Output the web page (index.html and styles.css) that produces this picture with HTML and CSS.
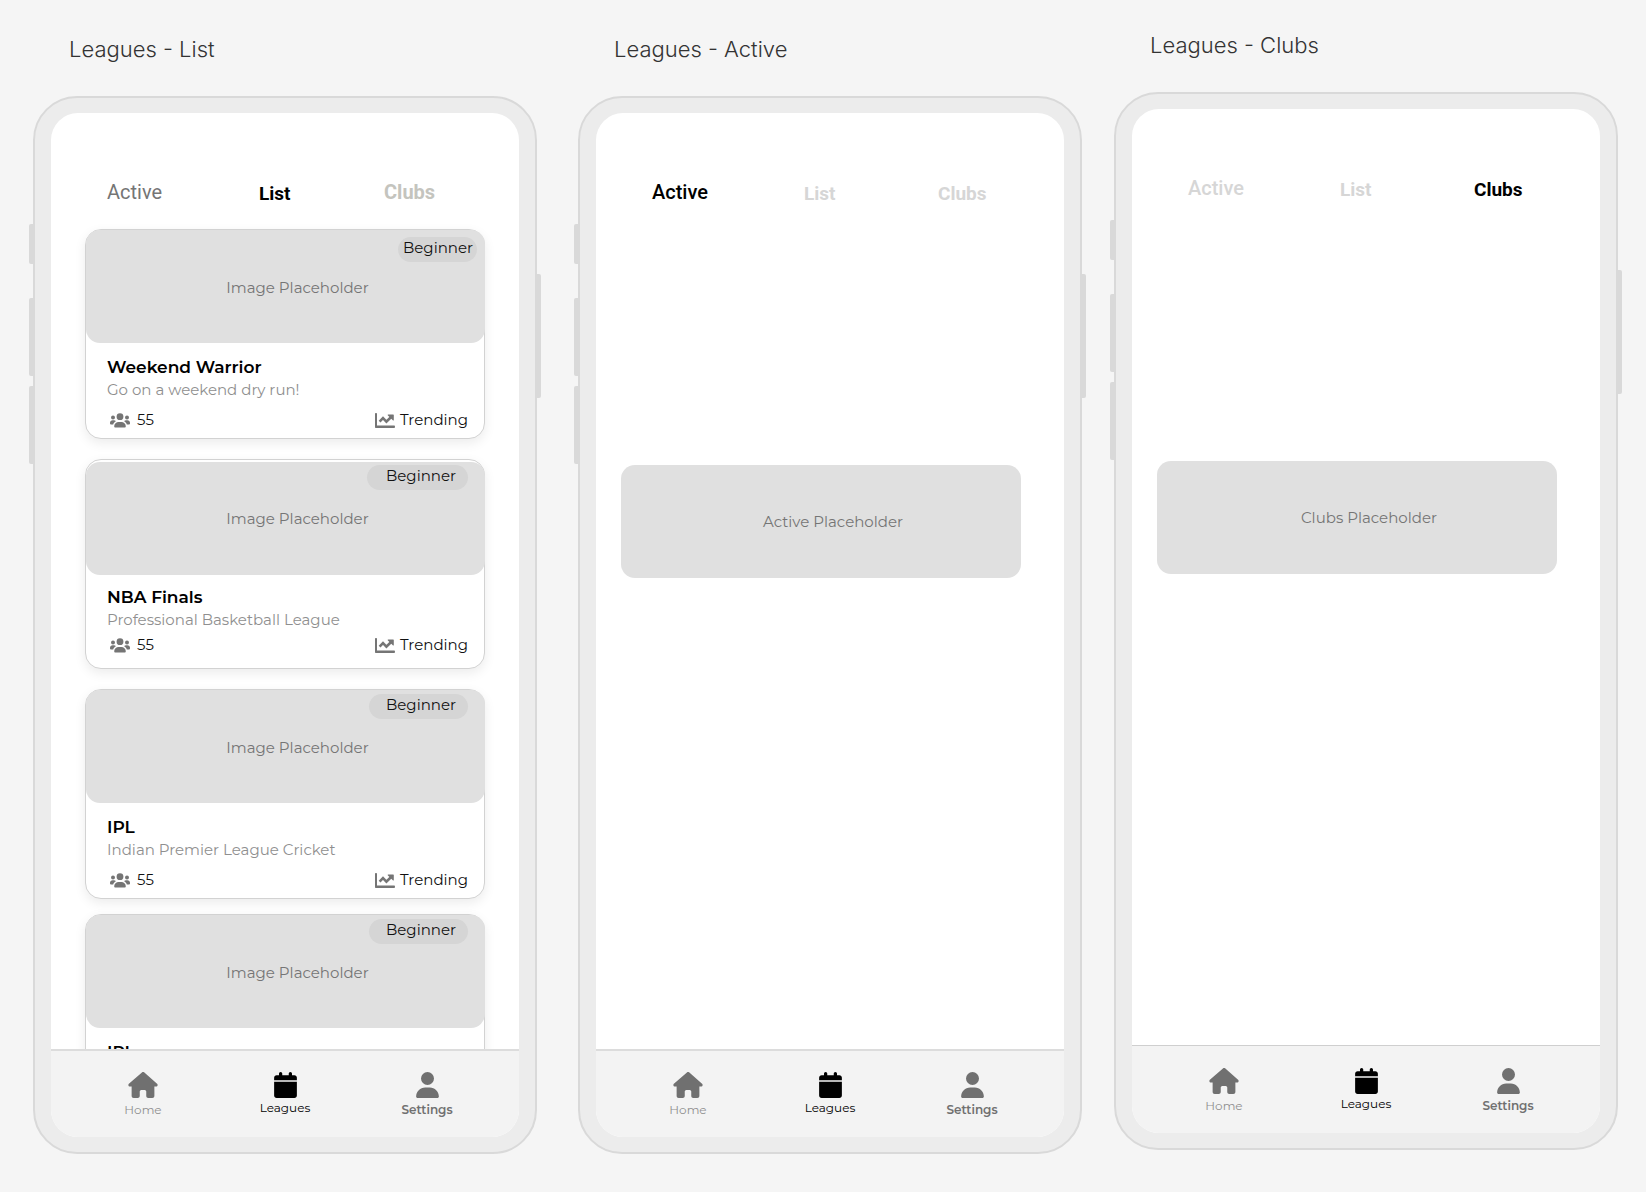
FILE: index.html
```
<!DOCTYPE html>
<html lang="en">
<head>
<meta charset="utf-8">
<meta name="viewport" content="width=device-width, initial-scale=1">
<title>Leagues</title>
<link rel="stylesheet" href="styles.css">
</head>
<body>
<svg class="sprite" aria-hidden="true">
  <symbol id="home" viewBox="0 0 576 512"><path d="M575.8 255.5c0 18-15 32.1-32 32.1h-32l.7 160.2c0 2.7-.2 5.4-.5 8.1V472c0 22.1-17.9 40-40 40H456c-1.1 0-2.2 0-3.3-.1c-1.4 .1-2.8 .1-4.2 .1H416 392c-22.1 0-40-17.9-40-40V448 384c0-17.7-14.3-32-32-32H256c-17.7 0-32 14.3-32 32v64 24c0 22.1-17.9 40-40 40H160 128.1c-1.5 0-3-.1-4.5-.2c-1.2 .1-2.4 .2-3.6 .2H104c-22.1 0-40-17.9-40-40V360c0-.9 0-1.9 .1-2.8V287.6H32c-18 0-32-14-32-32.1c0-9 3-17 10-24L266.4 8c7-7 15-8 22-8s15 2 21 7L564.8 231.5c8 7 12 15 11 24z"/></symbol>
  <symbol id="calendar" viewBox="0 0 448 512"><path d="M96 32V64H48C21.5 64 0 85.5 0 112v48H448V112c0-26.5-21.5-48-48-48H352V32c0-17.7-14.3-32-32-32s-32 14.3-32 32V64H160V32c0-17.7-14.3-32-32-32S96 14.3 96 32zM448 192H0V464c0 26.5 21.5 48 48 48H400c26.5 0 48-21.5 48-48V192z"/></symbol>
  <symbol id="user" viewBox="0 0 448 512"><path d="M224 256A128 128 0 1 0 224 0a128 128 0 1 0 0 256zm-45.7 48C79.8 304 0 383.8 0 482.3C0 498.7 13.3 512 29.7 512H418.3c16.4 0 29.7-13.3 29.7-29.7C448 383.8 368.2 304 269.7 304H178.3z"/></symbol>
  <symbol id="people" viewBox="0 0 20 15"><circle cx="10" cy="3.7" r="3.4"/><circle cx="3" cy="4.4" r="2"/><circle cx="17" cy="4.4" r="2"/><path d="M4.2 13.3C4.2 10.6 6.300 9 8.600 9h2.800c2.300 0 4.400 1.600 4.400 4.300 0 .8-.5 1.200-1.200 1.200H5.400c-.7 0-1.200-.4-1.200-1.200zM0 9.800C0 8.300 1.200 7.300 2.600 7.300h1.200c.9 0 1.700.4 2.200 1C4.500 9 3.500 10.200 3.200 11.500H1C.4 11.500 0 11.200 0 10.600zM20 9.800c0-1.500-1.200-2.500-2.600-2.500h-1.200c-.9 0-1.700.4-2.200 1 1.500.7 2.500 1.900 2.800 3.200H19c.6 0 1-.3 1-.9z"/></symbol>
  <symbol id="chart" viewBox="0 0 20 15"><path d="M1 0c.6 0 1 .4 1 1v11.500h17c.6 0 1 .5 1 1.200s-.4 1.300-1 1.300H1c-.6 0-1-.4-1-1V1C0 .4.400 0 1 0z"/><path d="M4.600 8.600 8 5.200l3.400 3.400L16.400 3.800" fill="none" stroke="currentColor" stroke-width="2.600"/><path d="M13.300 1.400h4.900c.4 0 .6.200.6.600v4.900c0 .6-.6.800-1 .4L12.900 2.400c-.4-.4-.2-1 .4-1z"/></symbol>
</svg>

<div class="board">
  <section class="frame frame--first">
    <h2 class="frame__title">Leagues - List</h2>
    <div class="phone">
      <span class="key key--mute"></span><span class="key key--up"></span><span class="key key--down"></span><span class="key key--power"></span>
      <div class="screen">
        <nav class="tabs tabs--list">
          <button class="tab tab--large tab--regular">Active</button>
          <button class="tab tab--on">List</button>
          <button class="tab tab--large tab--warm">Clubs</button>
        </nav>
        <main class="content cards">
          <article class="card">
            <div class="picture"><span class="badge badge--tight">Beginner</span>Image Placeholder</div>
            <div class="card__body">
              <h3 class="card__name">Weekend Warrior</h3>
              <p class="card__about">Go on a weekend dry run!</p>
              <div class="card__stats">
                <span class="stat"><svg class="stat__icon"><use href="#people"/></svg>55</span>
                <span class="stat stat--trend"><svg class="stat__icon"><use href="#chart"/></svg>Trending</span>
              </div>
            </div>
          </article>
          <article class="card card--inset">
            <div class="picture"><span class="badge badge--wide">Beginner</span>Image Placeholder</div>
            <div class="card__body">
              <h3 class="card__name">NBA Finals</h3>
              <p class="card__about">Professional Basketball League</p>
              <div class="card__stats">
                <span class="stat"><svg class="stat__icon"><use href="#people"/></svg>55</span>
                <span class="stat stat--trend"><svg class="stat__icon"><use href="#chart"/></svg>Trending</span>
              </div>
            </div>
          </article>
          <article class="card">
            <div class="picture"><span class="badge">Beginner</span>Image Placeholder</div>
            <div class="card__body">
              <h3 class="card__name">IPL</h3>
              <p class="card__about">Indian Premier League Cricket</p>
              <div class="card__stats">
                <span class="stat"><svg class="stat__icon"><use href="#people"/></svg>55</span>
                <span class="stat stat--trend"><svg class="stat__icon"><use href="#chart"/></svg>Trending</span>
              </div>
            </div>
          </article>
          <article class="card card--close">
            <div class="picture"><span class="badge">Beginner</span>Image Placeholder</div>
            <div class="card__body">
              <h3 class="card__name">IPL</h3>
            </div>
          </article>
        </main>
        <nav class="dock">
          <a class="dock__item" href="#"><svg class="dock__icon dock__icon--home"><use href="#home"/></svg>Home</a>
          <a class="dock__item dock__item--on" href="#"><svg class="dock__icon"><use href="#calendar"/></svg>Leagues</a>
          <a class="dock__item dock__item--strong" href="#"><svg class="dock__icon"><use href="#user"/></svg>Settings</a>
        </nav>
      </div>
    </div>
  </section>

  <section class="frame">
    <h2 class="frame__title">Leagues - Active</h2>
    <div class="phone">
      <span class="key key--mute"></span><span class="key key--up"></span><span class="key key--down"></span><span class="key key--power"></span>
      <div class="screen">
        <nav class="tabs">
          <button class="tab tab--large tab--medium tab--on">Active</button>
          <button class="tab">List</button>
          <button class="tab">Clubs</button>
        </nav>
        <main class="content">
          <div class="picture picture--alone">Active Placeholder</div>
        </main>
        <nav class="dock">
          <a class="dock__item" href="#"><svg class="dock__icon dock__icon--home"><use href="#home"/></svg>Home</a>
          <a class="dock__item dock__item--on" href="#"><svg class="dock__icon"><use href="#calendar"/></svg>Leagues</a>
          <a class="dock__item dock__item--strong" href="#"><svg class="dock__icon"><use href="#user"/></svg>Settings</a>
        </nav>
      </div>
    </div>
  </section>

  <section class="frame frame--raised">
    <h2 class="frame__title">Leagues - Clubs</h2>
    <div class="phone">
      <span class="key key--mute"></span><span class="key key--up"></span><span class="key key--down"></span><span class="key key--power"></span>
      <div class="screen">
        <nav class="tabs">
          <button class="tab tab--large tab--medium">Active</button>
          <button class="tab">List</button>
          <button class="tab tab--on">Clubs</button>
        </nav>
        <main class="content">
          <div class="picture picture--alone">Clubs Placeholder</div>
        </main>
        <nav class="dock dock--dark">
          <a class="dock__item" href="#"><svg class="dock__icon dock__icon--home"><use href="#home"/></svg>Home</a>
          <a class="dock__item dock__item--on" href="#"><svg class="dock__icon"><use href="#calendar"/></svg>Leagues</a>
          <a class="dock__item dock__item--strong" href="#"><svg class="dock__icon"><use href="#user"/></svg>Settings</a>
        </nav>
      </div>
    </div>
  </section>
</div>
</body>
</html>
```
FILE: styles.css
```
* { box-sizing: border-box; }

body {
  margin: 0;
  background: #f5f5f5;
  color: #111;
  font: 400 15px/20px Montserrat, Inter, sans-serif;
}

h2, h3, p { margin: 0; }

.sprite { position: absolute; width: 0; height: 0; }

/* Board with the three phones */
.board {
  display: flex;
  align-items: flex-start;
  gap: 32px;
  padding: 0 28px 36px 33px;
}

.frame { flex: 1 1 0; min-width: 0; padding-top: 33px; }
.frame--first { margin-right: 9px; }
.frame--raised { padding-top: 29px; }

.frame__title {
  padding-left: 36px;
  margin-bottom: 31px;
  color: #333;
  font: 300 22px/32px Inter, sans-serif;
}

/* Phone shell */
.phone {
  position: relative;
  display: flex;
  aspect-ratio: 504 / 1058;
  min-height: 0;
  padding: 15px 16px;
  border: 2px solid #d9d9d9;
  border-radius: 44px;
  background: #ececec;
}

.screen {
  flex: 1;
  display: flex;
  flex-direction: column;
  min-width: 0;
  overflow: hidden;
  border-radius: 27px;
  background: #fff;
}

.key {
  position: absolute;
  left: -6px;
  width: 4px;
  border-radius: 2px 0 0 2px;
  background: #d9d9d9;
}
.key--mute { top: 126px; height: 40px; }
.key--up { top: 200px; height: 78px; }
.key--down { top: 288px; height: 78px; }
.key--power { top: 176px; right: -6px; left: auto; height: 124px; border-radius: 0 2px 2px 0; }

/* Tabs */
.tabs {
  display: grid;
  grid-template-columns: 152fr 134fr 126fr;
  justify-items: start;
  align-items: start;
  padding: 67px 0 0 56px;
}
.tabs--list { grid-template-columns: 152fr 125fr 135fr; }

.tab {
  padding: 0;
  border: 0;
  background: none;
  color: #d6d6d6;
  font: 700 19px/28px Roboto, sans-serif;
}
.tab--large { font-size: 20px; line-height: 24px; }
.tab--medium { font-weight: 500; }
.tab--regular { color: #757575; font-weight: 400; }
.tab--warm { color: #c4c4be; }
.tab--on { color: #000; }

.content { flex: 1 1 0; min-height: 0; overflow: hidden; }

/* Pictures */
.picture {
  position: relative;
  display: flex;
  align-items: center;
  justify-content: center;
  height: 113px;
  margin-right: -1px;
  padding: 3px 0 0 24px;
  border-radius: 14px;
  background: #e0e0e0;
  color: #757575;
}
.picture--alone { margin: 257px 43px 0 25px; padding-top: 0; }

.badge {
  position: absolute;
  top: 4px;
  right: 17px;
  width: 99px;
  height: 25px;
  padding: 1px 0 0 17px;
  border-radius: 13px;
  background: #d5d5d5;
  color: #111;
}
.badge--wide { top: 3px; width: 101px; padding-left: 19px; }
.badge--tight { top: 7px; right: 8px; width: 79px; padding-left: 5px; }

/* League cards */
.cards {
  display: flex;
  flex-direction: column;
  gap: 20px;
  padding: 21px 34px 0;
}

.card {
  flex: none;
  min-height: 210px;
  border: 1px solid #d2d2d2;
  border-radius: 16px;
  background: #fff;
  box-shadow: 0 4px 12px rgba(0, 0, 0, .08);
}
.card--close { margin-top: -5px; }

.card__body { padding: 12px 16px 0 21px; }
.card__name { color: #000; font-size: 17px; font-weight: 600; line-height: 24px; }
.card__about { margin-top: 1px; color: #8f8f8f; }
.card__stats { display: flex; justify-content: space-between; margin-top: 10px; padding-left: 3px; }

.card--inset .picture { margin-top: 2px; padding-top: 0; }
.card--inset .card__body { padding-top: 10px; }
.card--inset .card__stats { margin-top: 5px; }

.stat { display: flex; align-items: center; gap: 7px; }
.stat--trend { gap: 5px; }
.stat__icon { width: 20px; height: 15px; color: #757575; fill: currentColor; }

/* Bottom navigation */
.dock {
  display: grid;
  grid-template-columns: repeat(3, 1fr);
  height: 88px;
  padding: 20px 21px 0;
  border-top: 2px solid #dcdcdc;
  background: #f3f3f3;
}
.dock--dark { padding-top: 21px; border-top: 1px solid #cfcfcf; }

.dock__item {
  display: flex;
  flex-direction: column;
  align-items: center;
  gap: 3px;
  color: #8f8f8f;
  font-size: 12px;
  line-height: 16px;
  text-decoration: none;
}
.dock__item--on { gap: 1px; color: #000; }
.dock__item--strong { color: #707070; font-weight: 600; }

.dock__icon { width: 23px; height: 28px; padding: 1px 0; fill: #707070; }
.dock__icon--home { width: 30px; }
.dock__item--on .dock__icon { fill: #000; }
```
